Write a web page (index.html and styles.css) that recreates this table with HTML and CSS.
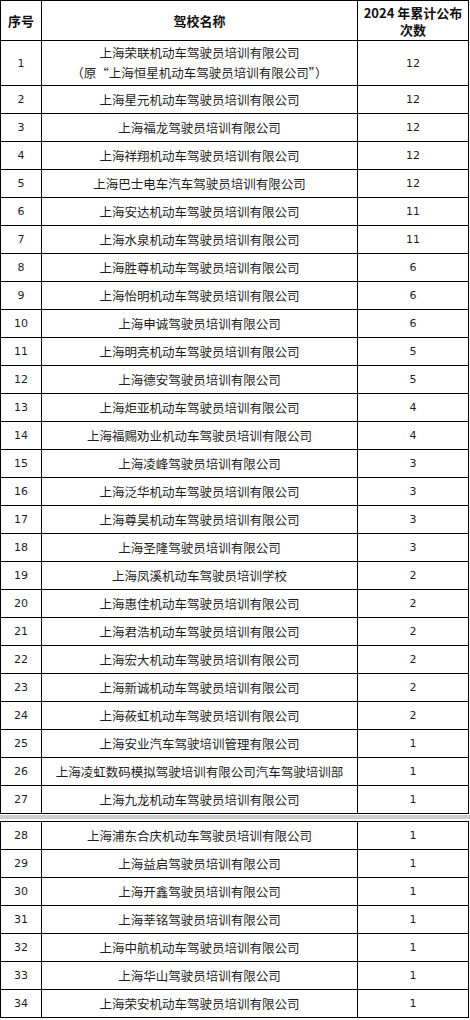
FILE: index.html
```html
<!DOCTYPE html>
<html lang="zh-CN">
<head>
<meta charset="utf-8">
<title>驾校名单</title>
<link rel="stylesheet" href="styles.css">
</head>
<body>
<div class="sheet">
  <div class="grid grid-main">
    <div class="cell head">序号</div>
    <div class="cell head">驾校名称</div>
    <div class="cell head head-count">2024 年累计公布<br>次数</div>

    <div class="cell num tall">1</div>
    <div class="cell name tall two">上海荣联机动车驾驶员培训有限公司<br>（原“上海恒星机动车驾驶员培训有限公司”）</div>
    <div class="cell num tall">12</div>

    <div class="cell num">2</div><div class="cell name">上海星元机动车驾驶员培训有限公司</div><div class="cell num">12</div>
    <div class="cell num">3</div><div class="cell name">上海福龙驾驶员培训有限公司</div><div class="cell num">12</div>
    <div class="cell num">4</div><div class="cell name">上海祥翔机动车驾驶员培训有限公司</div><div class="cell num">12</div>
    <div class="cell num">5</div><div class="cell name">上海巴士电车汽车驾驶员培训有限公司</div><div class="cell num">12</div>
    <div class="cell num">6</div><div class="cell name">上海安达机动车驾驶员培训有限公司</div><div class="cell num">11</div>
    <div class="cell num">7</div><div class="cell name">上海水泉机动车驾驶员培训有限公司</div><div class="cell num">11</div>
    <div class="cell num">8</div><div class="cell name">上海胜尊机动车驾驶员培训有限公司</div><div class="cell num">6</div>
    <div class="cell num">9</div><div class="cell name">上海怡明机动车驾驶员培训有限公司</div><div class="cell num">6</div>
    <div class="cell num">10</div><div class="cell name">上海申诚驾驶员培训有限公司</div><div class="cell num">6</div>
    <div class="cell num">11</div><div class="cell name">上海明亮机动车驾驶员培训有限公司</div><div class="cell num">5</div>
    <div class="cell num">12</div><div class="cell name">上海德安驾驶员培训有限公司</div><div class="cell num">5</div>
    <div class="cell num">13</div><div class="cell name">上海炬亚机动车驾驶员培训有限公司</div><div class="cell num">4</div>
    <div class="cell num">14</div><div class="cell name">上海福赐劝业机动车驾驶员培训有限公司</div><div class="cell num">4</div>
    <div class="cell num">15</div><div class="cell name">上海凌峰驾驶员培训有限公司</div><div class="cell num">3</div>
    <div class="cell num">16</div><div class="cell name">上海泛华机动车驾驶员培训有限公司</div><div class="cell num">3</div>
    <div class="cell num">17</div><div class="cell name">上海尊昊机动车驾驶员培训有限公司</div><div class="cell num">3</div>
    <div class="cell num">18</div><div class="cell name">上海圣隆驾驶员培训有限公司</div><div class="cell num">3</div>
    <div class="cell num">19</div><div class="cell name">上海凤溪机动车驾驶员培训学校</div><div class="cell num">2</div>
    <div class="cell num">20</div><div class="cell name">上海惠佳机动车驾驶员培训有限公司</div><div class="cell num">2</div>
    <div class="cell num">21</div><div class="cell name">上海君浩机动车驾驶员培训有限公司</div><div class="cell num">2</div>
    <div class="cell num">22</div><div class="cell name">上海宏大机动车驾驶员培训有限公司</div><div class="cell num">2</div>
    <div class="cell num">23</div><div class="cell name">上海新诚机动车驾驶员培训有限公司</div><div class="cell num">2</div>
    <div class="cell num">24</div><div class="cell name">上海莜虹机动车驾驶员培训有限公司</div><div class="cell num">2</div>
    <div class="cell num">25</div><div class="cell name">上海安业汽车驾驶培训管理有限公司</div><div class="cell num">1</div>
    <div class="cell num">26</div><div class="cell name">上海凌虹数码模拟驾驶培训有限公司汽车驾驶培训部</div><div class="cell num">1</div>
    <div class="cell num">27</div><div class="cell name">上海九龙机动车驾驶员培训有限公司</div><div class="cell num">1</div>
  </div>

  <div class="page-break"></div>

  <div class="grid grid-cont">
    <div class="cell num">28</div><div class="cell name">上海浦东合庆机动车驾驶员培训有限公司</div><div class="cell num">1</div>
    <div class="cell num">29</div><div class="cell name">上海益启驾驶员培训有限公司</div><div class="cell num">1</div>
    <div class="cell num">30</div><div class="cell name">上海开鑫驾驶员培训有限公司</div><div class="cell num">1</div>
    <div class="cell num">31</div><div class="cell name">上海莘铭驾驶员培训有限公司</div><div class="cell num">1</div>
    <div class="cell num">32</div><div class="cell name">上海中航机动车驾驶员培训有限公司</div><div class="cell num">1</div>
    <div class="cell num">33</div><div class="cell name">上海华山驾驶员培训有限公司</div><div class="cell num">1</div>
    <div class="cell num">34</div><div class="cell name">上海荣安机动车驾驶员培训有限公司</div><div class="cell num">1</div>
  </div>
</div>
</body>
</html>
```

FILE: styles.css
```css
html, body {
  margin: 0;
  padding: 0;
  background: #ffffff;
}

.sheet {
  width: 470px;
  font-family: "Noto Sans CJK SC", "Noto Sans", sans-serif;
  color: #1e1e1e;
}

.grid {
  display: grid;
  grid-template-columns: 40px 315px 110px;
  grid-auto-rows: 27px;
  gap: 1px;
  padding: 1px;
  background: #000000;
  width: 467px;
}

.grid-main {
  grid-template-rows: 39px 44px;
}

.cell {
  background: #ffffff;
  display: flex;
  align-items: center;
  justify-content: center;
  text-align: center;
  white-space: nowrap;
}

.head {
  font-weight: 700;
  font-size: 13px;
  line-height: 17px;
  color: #111111;
}

.name {
  font-size: 12.5px;
  line-height: 20px;
}

.num {
  font-family: "DejaVu Sans", "Noto Sans", sans-serif;
  font-size: 11px;
}

.page-break {
  height: 4px;
  margin: 1px 0 2px;
  background: #cdcdcd;
}
```
